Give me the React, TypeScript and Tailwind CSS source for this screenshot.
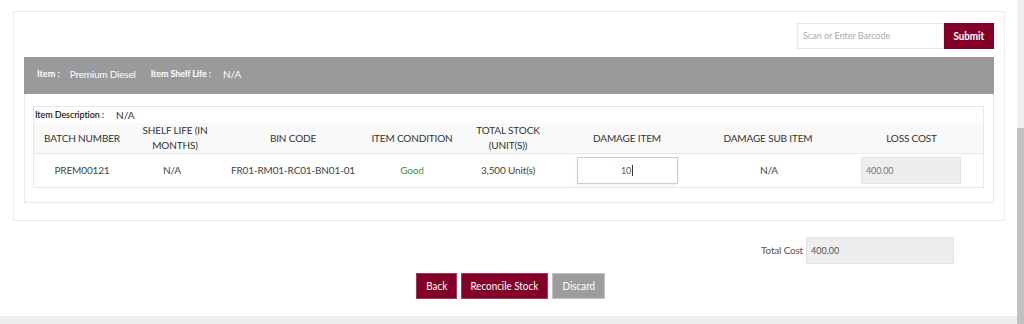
export default function App() {
  const grid =
    "grid grid-cols-[96px_90px_146px_92px_100px_138px_144px_143px]";
  return (
    <div className="flex h-[324px] w-[1024px] overflow-hidden bg-white font-['Lato','Liberation_Sans',sans-serif] text-[#333]">
      <div className="flex flex-1 flex-col">
        <div className="flex-1 pl-[13px] pt-[11px]">
          {/* Outer card */}
          <div className="h-[210px] w-[992px] border border-[#ebebeb] px-[10px] pt-[11px]">
            {/* Barcode row */}
            <div className="flex h-[26px] justify-end">
              <div className="flex h-[26px] w-[147px] items-center border border-[#e8e8e8] pl-[5px] text-[9px] text-[#aaa]">
                Scan or Enter Barcode
              </div>
              <button className="flex h-[26px] w-[50px] items-center justify-center bg-[#820027] text-[12px] font-bold text-white">
                <span className="inline-block scale-x-[0.82]">Submit</span>
              </button>
            </div>
            {/* Gray header */}
            <div className="mt-[8px] flex h-[37px] items-center bg-[#9a9a9a] pb-[3px] pl-[13px] text-white">
              <span className="text-[9px] font-bold">Item :</span>
              <span className="ml-[10px] text-[10px] tracking-[-0.2px]">Premium Diesel</span>
              <span className="ml-[15px] text-[9px] font-bold tracking-[-0.1px]">Item Shelf Life :</span>
              <span className="ml-[12px] text-[10px]">N/A</span>
            </div>
            {/* Panel body */}
            <div className="border-x border-b border-[#eaeaea] pb-[14px] pl-[8px] pr-[9px] pt-[12px]">
              <div className="w-[951px] border border-[#e8e8e8]">
                <div className="flex h-[16px] items-center pl-[1px]">
                  <span className="text-[9px] font-semibold tracking-[-0.1px] text-[#222]">Item Description :</span>
                  <span className="ml-[12px] text-[10px]">N/A</span>
                </div>
                <div className={`${grid} h-[31px] items-center border-b border-[#e8e8e8] bg-[#f9f9f9] text-[10px] leading-[15px] tracking-[-0.15px] text-[#333]`}>
                  <div className="text-center">BATCH NUMBER</div>
                  <div className="text-center">
                    SHELF LIFE (IN
                    <br />
                    MONTHS)
                  </div>
                  <div className="text-center">BIN CODE</div>
                  <div className="text-center">ITEM CONDITION</div>
                  <div className="text-center">
                    TOTAL STOCK
                    <br />
                    (UNIT(S))
                  </div>
                  <div className="text-center">DAMAGE ITEM</div>
                  <div className="text-center">DAMAGE SUB ITEM</div>
                  <div className="text-center">LOSS COST</div>
                </div>
                <div className={`${grid} h-[33px] items-center text-[10px] tracking-[-0.15px] text-[#444]`}>
                  <div className="text-center">PREM00121</div>
                  <div className="pr-[6px] text-center">N/A</div>
                  <div className="text-center">FR01-RM01-RC01-BN01-01</div>
                  <div className="text-center text-[#3c963c]">Good</div>
                  <div className="text-center">3,500 Unit(s)</div>
                  <div className="flex justify-center">
                    <div className="flex h-[27px] w-[101px] items-center justify-center border border-[#c8ccd4] bg-white text-[9px] text-[#555] shadow-[0_1px_3px_rgba(0,0,0,0.08)]">
                      10<span className="ml-[1px] inline-block h-[11px] w-px bg-[#333]" />
                    </div>
                  </div>
                  <div className="pl-[2px] text-center">N/A</div>
                  <div className="flex justify-center pr-[1px]">
                    <div className="flex h-[27px] w-[100px] items-center border border-[#e2e2e2] bg-[#eeeeee] pl-[4px] text-[9px] text-[#777]">
                      400.00
                    </div>
                  </div>
                </div>
              </div>
            </div>
          </div>
          {/* Total cost */}
          <div className="mt-[16px] flex w-[992px] items-center justify-end pr-[51px]">
            <span className="text-[10px] tracking-[-0.2px] text-[#555]">Total Cost</span>
            <div className="ml-[3px] flex h-[27px] w-[148px] items-center border border-[#e2e2e2] bg-[#eeeeee] pl-[4px] text-[9px] text-[#555]">
              400.00
            </div>
          </div>
          {/* Buttons */}
          <div className="mt-[9px] flex w-[992px] justify-center gap-[4px] pl-[3px] text-[12px] text-white">
            <button className="flex h-[26px] w-[41px] items-center justify-center border border-[#a33a55] bg-[#820027]">
              <span className="inline-block scale-x-[0.82]">Back</span>
            </button>
            <button className="flex h-[26px] w-[87px] items-center justify-center border border-[#a33a55] bg-[#820027]">
              <span className="inline-block whitespace-nowrap scale-x-[0.82]">Reconcile Stock</span>
            </button>
            <button className="flex h-[26px] w-[53px] items-center justify-center border border-[#c4c4c4] bg-[#9c9c9c]">
              <span className="inline-block scale-x-[0.82]">Discard</span>
            </button>
          </div>
        </div>
        <div className="h-[8px] bg-[#eeeeee]" />
      </div>
      <div className="flex w-[7px] flex-col">
        <div className="h-[128px] bg-[#f1f1f1]" />
        <div className="flex-1 bg-[#c1c1c1]" />
      </div>
    </div>
  );
}
